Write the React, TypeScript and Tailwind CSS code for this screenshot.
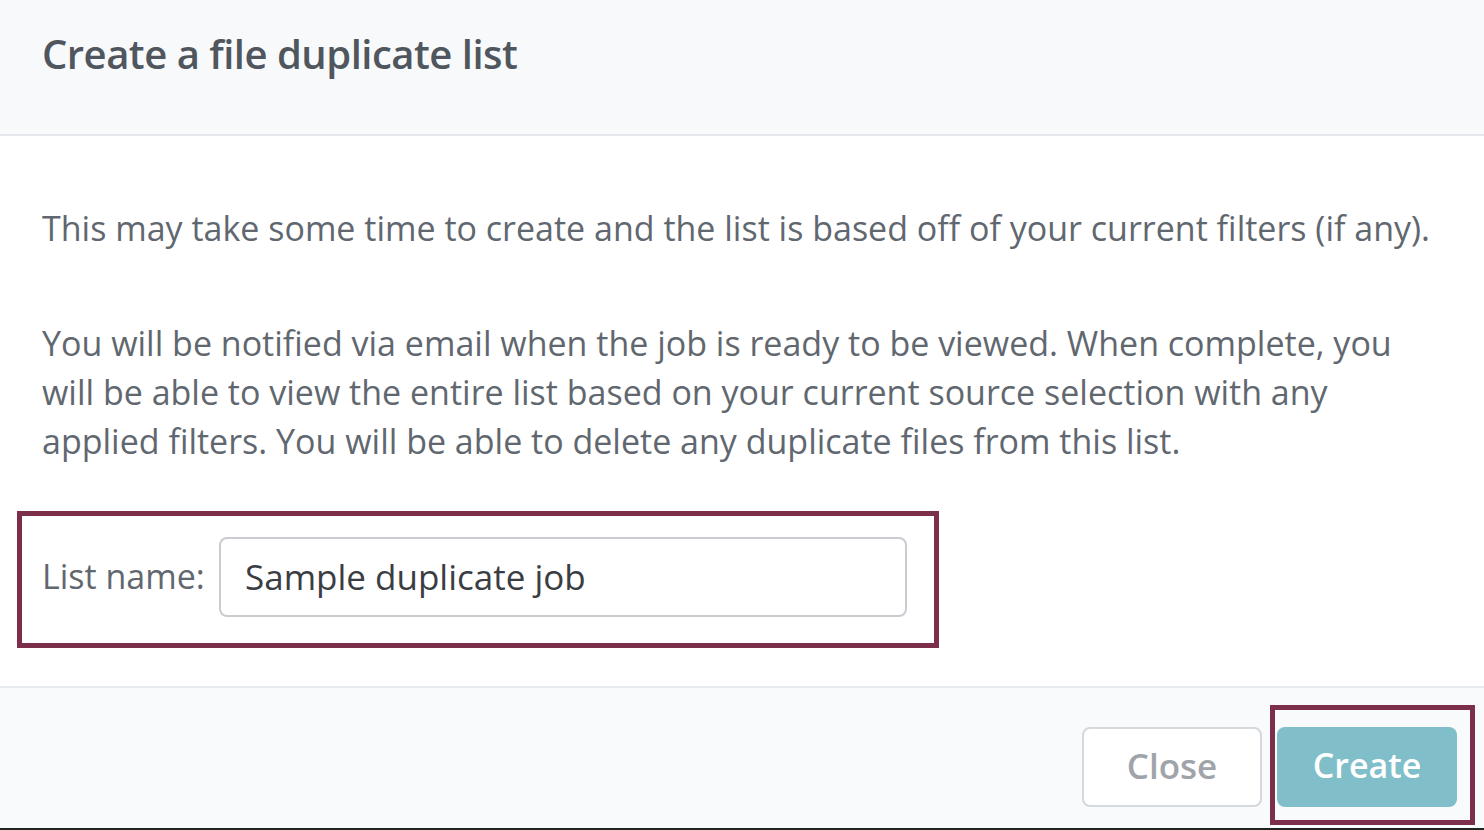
import React from 'react';

const App: React.FC = () => {
  return (
    <div className="h-[830px] w-[1484px] flex flex-col bg-white overflow-hidden font-['Open_Sans',sans-serif]">
      {/* Header */}
      <div className="h-[136px] shrink-0 bg-[#f8f9fb] border-b-2 border-[#e4e7ec] px-[42px] flex items-center pb-[26px]">
        <h2 className="text-[40px] font-semibold text-[#50565e] leading-none tracking-[-0.5px]">Create a file duplicate list</h2>
      </div>

      {/* Body */}
      <div className="flex-1 pt-[68px] px-[17px] text-[34px] leading-[49px] text-[#61676f]">
        <p className="px-[25px] whitespace-nowrap">
          This may take some time to create and the list is based off of your current filters (if any).
        </p>
        <p className="px-[25px] mt-[66px] whitespace-nowrap">
          You will be notified via email when the job is ready to be viewed. When complete, you
          <br />
          will be able to view the entire list based on your current source selection with any
          <br />
          applied filters. You will be able to delete any duplicate files from this list.
        </p>

        <div className="mt-[45px] w-[922px] h-[137px] border-[5px] border-[#7c2f4b] flex items-center pl-[20px] pb-[6px]">
          <label className="w-[164px] text-[34px] text-[#61676f] whitespace-nowrap">List name:</label>
          <input
            defaultValue="Sample duplicate job"
            className="ml-[13px] w-[688px] h-[80px] border-2 border-[#c9ccd1] rounded-[8px] px-[24px] text-[35px] text-[#3a3d42] outline-none bg-white"
          />
        </div>
      </div>

      {/* Footer */}
      <div className="relative h-[142px] shrink-0 bg-[#f9fafc] border-t-2 border-[#e6e9ee] flex items-start justify-end gap-[15px] pt-[39px] pr-[27px]">
        <button className="w-[180px] h-[80px] bg-white border-2 border-[#d5d8dc] rounded-[8px] text-[35px] text-[#a0a4a9] font-semibold leading-none pb-[4px]">
          Close
        </button>
        <button className="w-[180px] h-[80px] bg-[#80bfc9] rounded-[8px] text-[34px] text-white font-semibold leading-none pb-[4px]">
          Create
        </button>
        <div className="absolute right-[9px] top-[17px] w-[205px] h-[120px] border-[5px] border-[#7c2f4b] pointer-events-none" />
      </div>
      <div className="h-[2px] shrink-0 bg-[#222222]" />
    </div>
  );
};

export default App;
